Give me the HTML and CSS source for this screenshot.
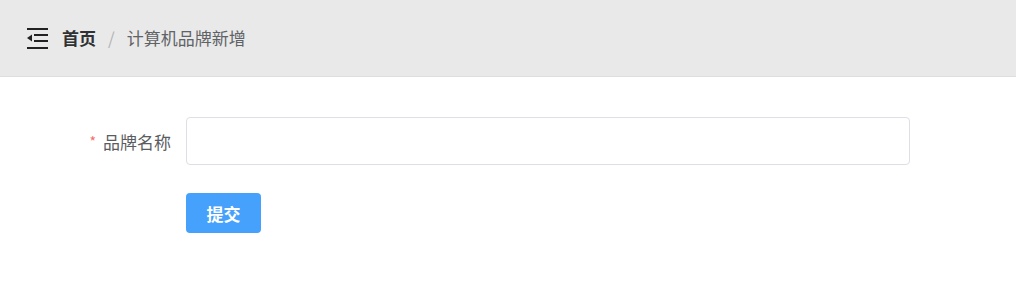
FILE: index.html
```html
<!DOCTYPE html>
<html lang="zh">
<head>
<meta charset="utf-8">
<link rel="stylesheet" href="styles.css">
</head>
<body>
<header class="navbar">
  <svg class="fold-icon" width="21" height="21" viewBox="0 0 21 21">
    <rect x="0" y="0" width="21" height="2" fill="#222"/>
    <rect x="7" y="6" width="14" height="2" fill="#222"/>
    <rect x="7" y="12" width="14" height="2" fill="#222"/>
    <rect x="0" y="19" width="21" height="2" fill="#222"/>
    <polygon points="0,10 5,6.5 5,13.5" fill="#222"/>
  </svg>
  <nav class="breadcrumb">
    <span class="crumb crumb-home">首页</span>
    <span class="sep">/</span>
    <span class="crumb crumb-current">计算机品牌新增</span>
  </nav>
</header>
<main class="form">
  <div class="form-row">
    <label class="form-label"><span class="req">*</span>品牌名称</label>
    <input class="form-input" type="text">
  </div>
  <div class="form-row form-actions">
    <button class="btn-primary">提交</button>
  </div>
</main>
</body>
</html>
```
FILE: styles.css
```css
html, body {
  margin: 0;
  padding: 0;
  background: #fff;
  font-family: "Noto Sans CJK SC", "Noto Sans", sans-serif;
}
.navbar {
  height: 76px;
  background: #e9e9e9;
  border-bottom: 1px solid #dedede;
  display: flex;
  align-items: center;
  padding-left: 27px;
  box-sizing: content-box;
}
.fold-icon {
  display: block;
}
.breadcrumb {
  display: flex;
  align-items: center;
  margin-left: 14px;
  font-size: 17px;
  line-height: 24px;
}
.crumb-home {
  color: #303133;
  font-weight: 700;
}
.sep {
  color: #b4b4b4;
  margin: 0 12px 0 12px;
}
.crumb-current {
  color: #606266;
}
.form {
  padding-top: 40px;
}
.form-row {
  display: flex;
  align-items: center;
}
.form-label {
  width: 171px;
  padding-right: 15px;
  text-align: right;
  font-size: 17px;
  color: #5a5c60;
}
.req {
  color: #f56c6c;
  font-size: 14px;
  margin-right: 7px;
  vertical-align: 2px;
}
.form-input {
  width: 724px;
  height: 48px;
  box-sizing: border-box;
  border: 1px solid #dcdfe6;
  border-radius: 4px;
  outline: none;
  padding: 0 15px;
  font-size: 17px;
  font-family: inherit;
}
.form-actions {
  margin-top: 28px;
  padding-left: 186px;
}
.btn-primary {
  width: 75px;
  height: 40px;
  border: none;
  border-radius: 4px;
  background: #45a1fb;
  color: #fff;
  font-size: 17px;
  font-weight: 700;
  font-family: inherit;
  padding: 0;
}
```
